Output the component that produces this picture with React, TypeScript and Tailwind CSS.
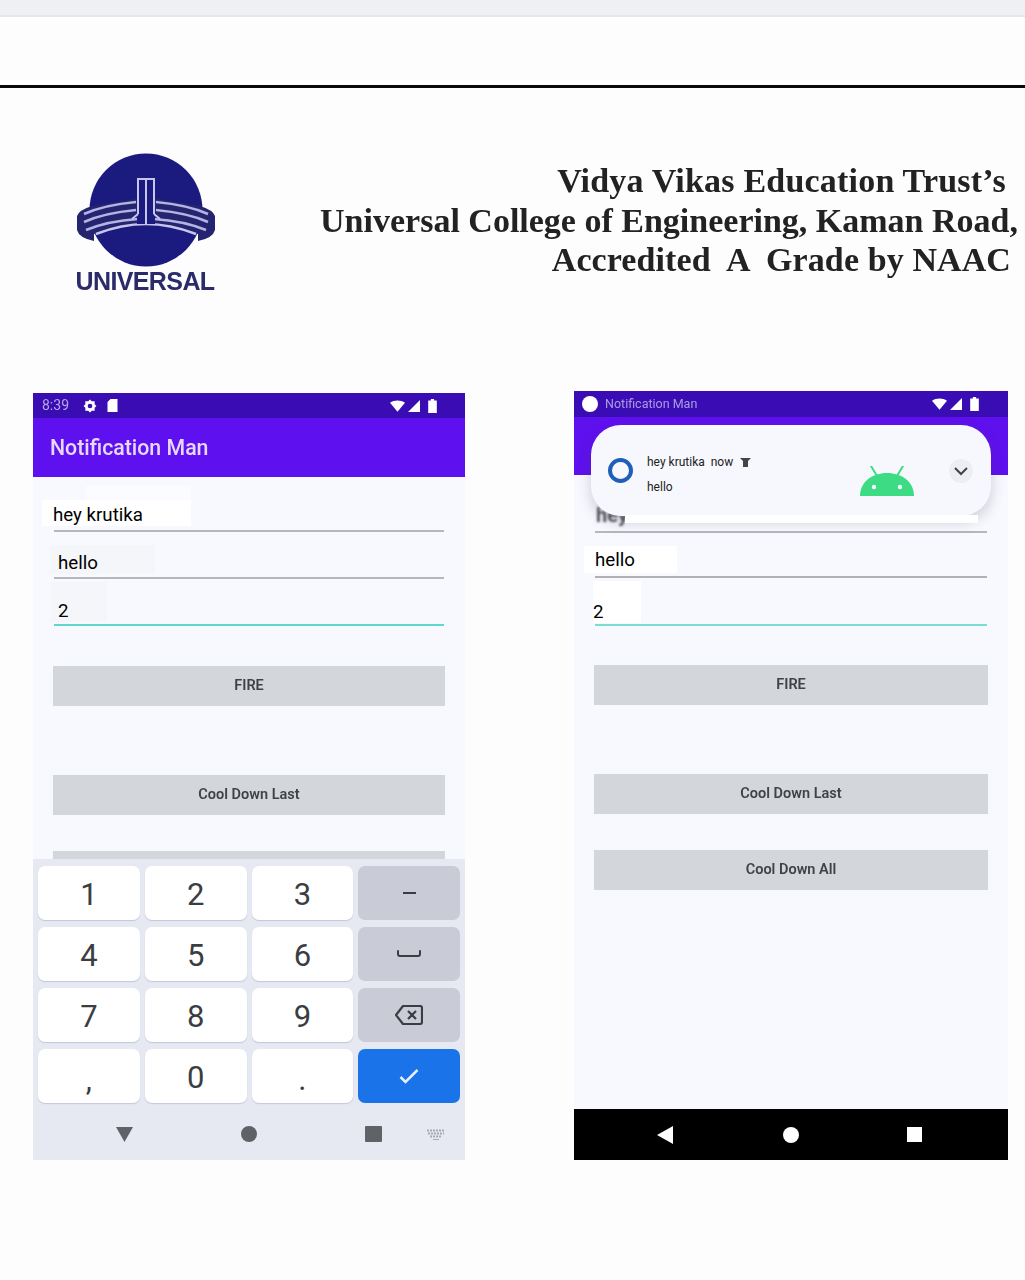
import React from 'react';

const Wifi = () => (
  <svg width="15" height="12" viewBox="0 0 16 12" className="fill-white">
    <path d="M0 2.500C4.500-.8 11.500-.8 16 2.500L8 12z" />
  </svg>
);

const Signal = () => (
  <svg width="12" height="12" viewBox="0 0 12 12" className="fill-white">
    <path d="M12 0v12H0z" />
  </svg>
);

const Battery = () => (
  <svg width="9" height="14" viewBox="0 0 8 13" className="fill-white">
    <path d="M2.500 0h3v1.500H8V13H0V1.500h2.500z" />
  </svg>
);

const Logo = () => (
  <svg width="142" height="118" viewBox="75 150 142 118" className="blur-[0.5px]">
    <circle cx="146" cy="208" r="56.500" fill="#1b1a7e" />
    <path
      d="M77 214Q79 208 92 204L146 195 200 204Q213 208 215 214V228Q213 236 198 239V232Q170 223 146 223T94 232V239Q79 236 77 228z"
      fill="#25246f"
    />
    <path
      d="M84 212Q104 203 136 200M84 220Q104 211 136 208M86 228Q108 219 138 217M208 212Q188 203 156 200M208 220Q188 211 156 208M206 228Q184 219 154 217"
      fill="none"
      stroke="#b4b3e6"
      strokeWidth="2.500"
    />
    <path d="M96 232Q122 222 146 222T196 232" fill="none" stroke="#c6c5ee" strokeWidth="2.500" />
    <path d="M137 176H155V222H137z" fill="#1b1a7e" />
    <path d="M138 212V177H154V212M146 177V222M138 212L132 217M154 212L160 217" fill="none" stroke="#c6c5ee" strokeWidth="2" />
  </svg>
);

const Android = () => (
  <svg width="54" height="32" viewBox="0 0 54 32">
    <path d="M0 30C0 16 12 7 27 7S54 16 54 30z" fill="#3ddc84" />
    <path d="M11 0l6 10M43 0l-6 10" stroke="#3ddc84" strokeWidth="2" strokeLinecap="round" />
    <circle cx="14" cy="21" r="2.200" fill="#f6f8fd" />
    <circle cx="40" cy="21" r="2.200" fill="#f6f8fd" />
  </svg>
);

const Button = ({ label, className }: { label?: string; className: string }) => (
  <div className={`flex h-10 shrink-0 items-center justify-center bg-[#d3d6da] ${className}`}>
    {label && <span className="text-[14.500px] font-semibold text-[#3f4346] blur-[0.5px] font-['Roboto',sans-serif]">{label}</span>}
  </div>
);

const Key = ({ label, className }: { label: string; className?: string }) => (
  <div className={`flex h-[54px] justify-center rounded-[7px] bg-white text-[31px] leading-none text-[#3a3d42] shadow-[0_1px_1px_rgba(90,100,130,0.25)] font-['Roboto',sans-serif] ${className ?? 'items-center pt-[2px]'}`}>
    {label}
  </div>
);

const ActionKey = ({ children, color }: { children: React.ReactNode; color?: string }) => (
  <div className={`flex h-[54px] items-center justify-center rounded-[7px] ${color ?? 'bg-[#c9ccd6]'}`}>{children}</div>
);

const Keyboard = () => (
  <div className="flex h-[301px] shrink-0 flex-col bg-[#e6e9f2]">
    <div className="grid grid-cols-4 gap-x-[5px] gap-y-[7px] px-[5px] pt-[7px]">
      <Key label="1" />
      <Key label="2" />
      <Key label="3" />
      <ActionKey>
        <div className="h-[2px] w-[13px] bg-[#3a3d42]" />
      </ActionKey>
      <Key label="4" />
      <Key label="5" />
      <Key label="6" />
      <ActionKey>
        <svg width="26" height="8" viewBox="0 0 26 8" fill="none" stroke="#3a3d42" strokeWidth="2" strokeLinecap="round">
          <path d="M2 1v3q0 2 2 2h18q2 0 2-2V1" />
        </svg>
      </ActionKey>
      <Key label="7" />
      <Key label="8" />
      <Key label="9" />
      <ActionKey>
        <svg width="28" height="20" viewBox="0 0 28 20" fill="none" stroke="#3a3d42" strokeWidth="2.200" strokeLinejoin="round">
          <path d="M8 1h17q2 0 2 2v14q0 2-2 2H8L1 10zM13 6l8 8M21 6l-8 8" />
        </svg>
      </ActionKey>
      <Key label="," className="items-end pb-[8px]" />
      <Key label="0" />
      <Key label="." className="items-end pb-[8px]" />
      <ActionKey color="bg-[#1a73e8]">
        <svg width="20" height="16" viewBox="0 0 20 16" fill="none" stroke="#e4eefc" strokeWidth="2.500">
          <path d="M1.500 9l5 5L18.500 2" />
        </svg>
      </ActionKey>
    </div>
    <div className="flex flex-1 items-center pl-[83px] pt-[5px]">
      <svg width="17" height="15" viewBox="0 0 17 15" className="fill-[#5f6368]">
        <path d="M0 0h17L8.500 15z" />
      </svg>
      <div className="ml-[108px] h-4 w-4 rounded-full bg-[#5f6368]" />
      <div className="ml-[108px] h-[16px] w-[17px] rounded-[1px] bg-[#5f6368]" />
      <svg width="18" height="11" viewBox="0 0 18 11" className="ml-[45px]" fill="none" stroke="#a6a9b0">
        <path d="M0 1.500h18M1 4.500h16M3 7.500h12" strokeWidth="2" strokeDasharray="2 1" />
        <path d="M6 10.500h6" strokeWidth="1" />
      </svg>
    </div>
  </div>
);

export default function App() {
  return (
    <div className="h-[1280px] w-[1025px] overflow-hidden bg-[#fdfdfe] font-['Roboto',sans-serif]">
      <div className="h-[17px] border-b-2 border-[#e4e6ec] bg-[#eef0f4]" />
      <div className="h-[68px]" />
      <div className="h-[3px] bg-[#0a0a0a]" />

      <div className="flex h-[303px]">
        <div className="pl-[75px] pt-[64px]">
          <Logo />
          <div className="-mt-[3px] w-[140px] text-center text-[25px] font-bold leading-[28px] tracking-[-0.6px] text-[#2b2b6a] blur-[0.5px] font-['Liberation_Sans',sans-serif]">
            UNIVERSAL
          </div>
        </div>
        <div className="flex flex-1 flex-col items-end whitespace-nowrap pt-[73px] text-[34px] font-bold leading-[39.5px] text-[#222] blur-[0.5px] font-['Liberation_Serif',serif]">
          <div className="pr-[19px] tracking-[0.2px]">Vidya Vikas Education Trust’s</div>
          <div className="pr-[7px]">Universal College of Engineering, Kaman Road,</div>
          <div className="whitespace-pre pr-[14px] tracking-[0.1px]">Accredited  A  Grade by NAAC</div>
        </div>
      </div>

      <div className="flex items-start pl-[33px]">
        {/* left phone, keyboard open */}
        <div className="mt-[2px] flex h-[767px] w-[432px] flex-col bg-[#f8f9fe]">
          <div className="flex h-[25px] shrink-0 items-center bg-[#3a0db4] pl-[9px]">
            <span className="w-[41px] text-[14px] text-[#b5a8e6] blur-[0.3px]">8:39</span>
            <svg width="14" height="14" viewBox="0 0 24 24" className="fill-white">
              <path d="M12 1l3 3h5v5l3 3-3 3v5h-5l-3 3-3-3H4v-5l-3-3 3-3V4h5zm0 7a4 4 0 100 8 4 4 0 000-8z" />
            </svg>
            <svg width="11" height="13" viewBox="0 0 10 13" className="ml-[10px] fill-white">
              <path d="M3 0h7v13H0V3z" />
            </svg>
            <div className="ml-[272px] flex items-center gap-[3px]">
              <Wifi />
              <Signal />
              <div className="ml-[5px]"><Battery /></div>
            </div>
          </div>
          <div className="flex h-[59px] shrink-0 items-center bg-[#5f10ee] pl-[17px] pt-[1px] text-[21.300px] font-medium text-[#e6d8fb] blur-[0.5px]">
            Notification Man
          </div>
          <div className="flex h-[382px] shrink-0 flex-col overflow-hidden px-[20px] pt-[9px]">
            <div className="ml-[33px] h-[14px] w-[105px] shrink-0 bg-[#fbfcff]" />
            <div className="-ml-[11px] flex h-[26px] w-[149px] shrink-0 items-center bg-white pl-[11px] pt-[4px] text-[18.700px] text-black">hey krutika</div>
            <div className="mx-px mt-[4px] h-[2px] shrink-0 bg-[#b6b7bd]" />
            <div className="-ml-[3px] mt-[13px] flex h-[29px] w-[105px] shrink-0 items-center bg-[#f5f6f9] pl-[8px] pt-[8px] text-[18.700px] text-black">hello</div>
            <div className="mx-px mt-[3px] h-[2px] shrink-0 bg-[#b6b7bd]" />
            <div className="-ml-[3px] mt-[3px] flex h-[40px] w-[57px] shrink-0 items-center bg-[#f5f6f9] pl-[8px] pt-[19px] text-[18.700px] text-black">2</div>
            <div className="mx-px mt-[2px] h-[2px] shrink-0 bg-[#5fd8d0]" />
            <Button label="FIRE" className="mt-[40px]" />
            <Button label="Cool Down Last" className="mt-[69px]" />
            <Button className="mt-[36px]" />
          </div>
          <Keyboard />
        </div>

        {/* right phone, heads-up notification */}
        <div className="relative ml-[109px] flex h-[769px] w-[434px] flex-col bg-[#f8f9fe]">
          <div className="flex h-[26px] shrink-0 items-center bg-[#3a0db4] pl-[8px]">
            <div className="h-4 w-4 rounded-full bg-white" />
            <span className="ml-[7px] w-[327px] text-[12.500px] text-[#a99de2] blur-[0.4px]">Notification Man</span>
            <div className="flex items-center gap-[3px]">
              <Wifi />
              <Signal />
              <div className="ml-[5px]"><Battery /></div>
            </div>
          </div>
          <div className="h-[58px] shrink-0 bg-[#5f10ee]" />
          <div className="flex flex-1 flex-col px-[20px] pt-[26px]">
            <div className="flex h-[24px] shrink-0 items-end text-[20px] font-bold leading-none text-[#55565c] blur-[0.8px]">
              <span className="pl-[2px]">hey</span>
            </div>
            <div className="mx-px mt-[6px] h-[2px] shrink-0 bg-[#b6b7bd]" />
            <div className="-ml-[10px] mt-[13px] flex h-[27px] w-[93px] shrink-0 items-center bg-white pl-[11px] pt-[1px] text-[18.700px] text-black">hello</div>
            <div className="mx-px mt-[3px] h-[2px] shrink-0 bg-[#b0b1b6]" />
            <div className="-ml-[1px] mt-[3px] flex h-[42px] w-[48px] shrink-0 items-center bg-white pt-[20px] text-[18.700px] text-black">2</div>
            <div className="mx-px mt-[1px] h-[2px] shrink-0 bg-[#7adcd4]" />
            <Button label="FIRE" className="mt-[39px]" />
            <Button label="Cool Down Last" className="mt-[69px]" />
            <Button label="Cool Down All" className="mt-[36px]" />
          </div>
          <div className="flex h-[51px] shrink-0 items-center bg-black pl-[83px]">
            <svg width="16" height="18" viewBox="0 0 16 18" className="fill-white">
              <path d="M16 0v18L0 9z" />
            </svg>
            <div className="ml-[110px] h-4 w-4 rounded-full bg-white" />
            <div className="ml-[108px] h-[15px] w-[15px] bg-white" />
          </div>

          <div className="absolute left-[17px] top-[34px] flex h-[91px] w-[400px] items-center rounded-[30px] bg-[#f6f8fd] pl-[17px] shadow-[0_6px_14px_rgba(60,60,80,0.22)]">
            <div className="h-[25px] w-[25px] rounded-full border-[4px] border-[#1f5fb8]" />
            <div className="ml-[14px] flex flex-col pt-[8px] text-[12px] leading-none text-[#222]">
              <div className="flex items-center gap-[5px] whitespace-pre">
                <span>hey krutika  now</span>
                <svg width="11" height="9" viewBox="0 0 11 9" className="ml-[2px] fill-[#444]">
                  <path d="M0 0h11L8 3v6H3V3z" />
                </svg>
              </div>
              <span className="mt-[13px]">hello</span>
            </div>
            <div className="absolute left-[269px] top-[41px]"><Android /></div>
            <div className="absolute left-[358px] top-[34px] flex h-[24px] w-[24px] items-center justify-center rounded-full bg-[#eceef3]">
              <svg width="14" height="9" viewBox="0 0 14 9" fill="none" stroke="#444" strokeWidth="2">
                <path d="M1 1l6 6 6-6" />
              </svg>
            </div>
          </div>
          <div className="absolute left-[51px] top-[124px] h-[8px] w-[353px] bg-white" />
        </div>
      </div>
    </div>
  );
}
